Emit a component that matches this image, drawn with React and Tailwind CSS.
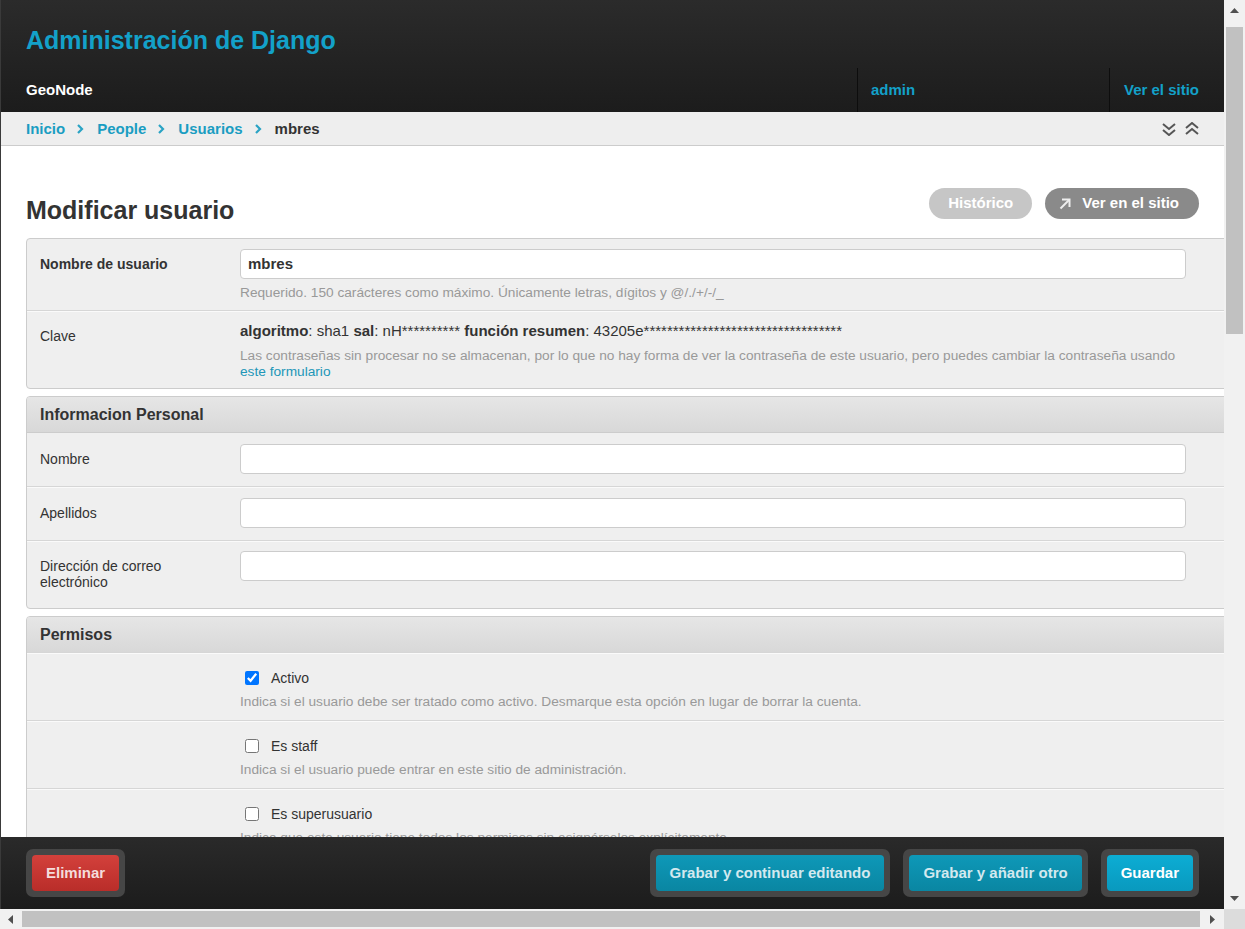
import React from 'react';

const cyan = 'text-[#13a1c9]';

const Crumb = () => (
  <svg width="8" height="10" viewBox="0 0 8 10" className="ml-[11px] mr-[13px]">
    <polyline points="2,1 6,5 2,9" fill="none" stroke="#2aa3c4" strokeWidth="2.2" />
  </svg>
);

const Chevrons = ({ up }) => (
  <svg width="14" height="14" viewBox="0 0 14 14">
    {up ? (
      <>
        <polyline points="1,6 7,1 13,6" fill="none" stroke="#555" strokeWidth="2" />
        <polyline points="1,12 7,7 13,12" fill="none" stroke="#555" strokeWidth="2" />
      </>
    ) : (
      <>
        <polyline points="1,2 7,7 13,2" fill="none" stroke="#555" strokeWidth="2" />
        <polyline points="1,8 7,13 13,8" fill="none" stroke="#555" strokeWidth="2" />
      </>
    )}
  </svg>
);

const TextInput = ({ value }) => (
  <div className="w-[946px] h-[30px] bg-white border border-[#cccccc] rounded-[4px] flex items-center px-[7px] text-[15px] font-bold text-[#333]">
    {value}
  </div>
);

const Row = ({ label, bold, first, pt = 'pt-[11px]', pb = 'pb-[12px]', children }) => (
  <div
    className={`flex px-[13px] ${pt} ${pb} ${first ? '' : 'border-t border-[#d6d6d6] shadow-[inset_0_1px_0_#fafafa]'}`}
  >
    <div className={`w-[200px] shrink-0 pr-[12px] pt-[7px] leading-4 text-[14px] text-[#333] ${bold ? 'font-bold' : ''}`}>
      {label}
    </div>
    <div>{children}</div>
  </div>
);

const Help = ({ children }) => (
  <div className="mt-[5px] leading-[18px] text-[13.7px] text-[#999]">{children}</div>
);

const CheckRow = ({ label, help, checked }) => (
  <div className="flex px-[13px] pt-[15px] pb-[9px] border-t border-[#d6d6d6] shadow-[inset_0_1px_0_#fafafa]">
    <div className="w-[200px] shrink-0" />
    <div>
      <div className="flex items-center h-[20px]">
        <input type="checkbox" defaultChecked={checked} className="m-0 ml-[5px] w-[14px] h-[14px]" />
        <span className="ml-[12px] text-[14px] text-[#333]">{label}</span>
      </div>
      <Help>{help}</Help>
    </div>
  </div>
);

const Fieldset = ({ title, children }) => (
  <div className="w-[1210px] mb-[7px] border border-[#cccccc] rounded-[4px] bg-[#efefef]">
    {title && (
      <div className="h-[36px] flex items-center px-[13px] bg-gradient-to-b from-[#e6e6e6] to-[#d8d8d8] border-b border-[#cccccc] rounded-t-[3px] text-[16px] font-bold text-[#333]">
        {title}
      </div>
    )}
    {children}
  </div>
);

const FooterButton = ({ label, tone }) => {
  const tones = {
    red: 'bg-gradient-to-b from-[#d3403b] to-[#b92d29] text-[#f4dcdc]',
    teal: 'bg-gradient-to-b from-[#0e98b8] to-[#0a86a2] text-[#d3e9ef]',
    blue: 'bg-gradient-to-b from-[#0cadd4] to-[#0999be] text-white',
  };
  return (
    <div className="rounded-[7px] bg-[#464646] p-[6px]">
      <div className={`h-[36px] px-[14px] rounded-[4px] flex items-center text-[15px] font-bold ${tones[tone]}`}>
        {label}
      </div>
    </div>
  );
};

const Triangle = ({ dir }) => {
  const pts = {
    up: '0,5 4.5,0 9,5',
    down: '0,0 4.5,5 9,0',
    left: '5,0 0,4.5 5,9',
    right: '0,0 5,4.5 0,9',
  };
  const w = dir === 'up' || dir === 'down' ? 9 : 5;
  const h = dir === 'up' || dir === 'down' ? 5 : 9;
  return (
    <svg width={w} height={h} viewBox={`0 0 ${w} ${h}`}>
      <polygon points={pts[dir]} fill="#505050" />
    </svg>
  );
};

export default function App() {
  return (
    <div className="w-[1245px] h-[929px] flex flex-col overflow-hidden font-['Liberation_Sans',Arial,sans-serif]">
      <div className="flex h-[909px]">
        {/* Main page */}
        <div className="w-[1224px] h-full flex flex-col overflow-hidden border-l border-[#3a3a3a]">
          {/* Header */}
          <header className="bg-gradient-to-b from-[#2b2b2b] to-[#1c1c1c]">
            <div className="h-[67px] pl-[25px] pt-[25px]">
              <h1 className={`text-[25px] leading-[30px] font-bold ${cyan}`}>Administración de Django</h1>
            </div>
            <div className="flex h-[45px] pt-[1px]">
              <div className="flex-1 flex items-center pl-[25px] text-[15px] font-bold text-white">GeoNode</div>
              <div className="w-[252px] h-full flex items-center pl-[13px] border-l border-[#0d0d0d] text-[15px] font-bold text-[#13a1c9]">
                admin
              </div>
              <div className="h-full flex items-center pl-[14px] pr-[25px] border-l border-[#0d0d0d] text-[15px] font-bold text-[#13a1c9]">
                Ver el sitio
              </div>
            </div>
          </header>

          {/* Breadcrumbs */}
          <div className="h-[34px] shrink-0 flex items-center pt-[1px] px-[25px] bg-[#eeeeee] border-b border-[#cccccc] text-[15px] font-bold">
            <span className="text-[#1a9dc2]">Inicio</span>
            <Crumb />
            <span className="text-[#1a9dc2]">People</span>
            <Crumb />
            <span className="text-[#1a9dc2]">Usuarios</span>
            <Crumb />
            <span className="text-[#333]">mbres</span>
            <div className="ml-auto flex items-center gap-[9px]">
              <Chevrons />
              <Chevrons up />
            </div>
          </div>

          {/* Content */}
          <main className="flex-1 overflow-hidden bg-white pl-[25px] pt-[42px]">
            <div className="flex items-start justify-between w-[1173px] h-[37px] mb-[13px]">
              <h2 className="mt-[7px] text-[25px] leading-[30px] font-bold text-[#333]">Modificar usuario</h2>
              <div className="flex gap-[13px]">
                <div className="h-[31px] px-[19px] rounded-full bg-[#c6c6c6] flex items-center text-[15px] font-bold text-white">
                  Histórico
                </div>
                <div className="h-[31px] pl-[14px] pr-[20px] rounded-full bg-[#8a8a8a] flex items-center gap-[11px] text-[15px] font-bold text-white">
                  <svg width="12" height="12" viewBox="0 0 12 12">
                    <line x1="1.5" y1="10.5" x2="10" y2="2" stroke="#eee" strokeWidth="2" />
                    <polyline points="3,1.5 10.5,1.5 10.5,9" fill="none" stroke="#eee" strokeWidth="2" />
                  </svg>
                  Ver en el sitio
                </div>
              </div>
            </div>

            <Fieldset>
              <Row label="Nombre de usuario" bold first pt="pt-[10px]" pb="pb-[8px]">
                <TextInput value="mbres" />
                <Help>Requerido. 150 carácteres como máximo. Únicamente letras, dígitos y @/./+/-/_</Help>
              </Row>
              <Row label="Clave" pt="pt-[10px]" pb="pb-[8px]">
                <div className="leading-[20px] text-[15px] text-[#333]">
                  <b>algoritmo</b>: sha1 <b>sal</b>: nH********** <b>función resumen</b>: 43205e**********************************
                </div>
                <div className="mt-[7px] w-[960px] leading-4 text-[13.7px] text-[#999] whitespace-nowrap">
                  Las contraseñas sin procesar no se almacenan, por lo que no hay forma de ver la contraseña de este usuario, pero puedes cambiar la contraseña usando
                  <br />
                  <span className="text-[#2196b8]">este formulario</span>
                </div>
              </Row>
            </Fieldset>

            <Fieldset title="Informacion Personal">
              <Row label="Nombre" first>
                <TextInput />
              </Row>
              <Row label="Apellidos">
                <TextInput />
              </Row>
              <Row label="Dirección de correo electrónico" pt="pt-[10px]" pb="pb-[18px]">
                <TextInput />
              </Row>
            </Fieldset>

            <Fieldset title="Permisos">
              <div className="-mt-px">
                <CheckRow
                  checked
                  label="Activo"
                  help="Indica si el usuario debe ser tratado como activo. Desmarque esta opción en lugar de borrar la cuenta."
                />
                <CheckRow label="Es staff" help="Indica si el usuario puede entrar en este sitio de administración." />
                <CheckRow
                  label="Es superusuario"
                  help="Indica que este usuario tiene todos los permisos sin asignárselos explícitamente."
                />
              </div>
            </Fieldset>
          </main>

          {/* Submit row */}
          <footer className="h-[72px] shrink-0 flex items-center px-[25px] bg-gradient-to-b from-[#2a2a2a] to-[#1c1c1c]">
            <FooterButton label="Eliminar" tone="red" />
            <div className="ml-auto flex gap-[13px]">
              <FooterButton label="Grabar y continuar editando" tone="teal" />
              <FooterButton label="Grabar y añadir otro" tone="teal" />
              <FooterButton label="Guardar" tone="blue" />
            </div>
          </footer>
        </div>

        {/* Vertical scrollbar */}
        <div className="w-[21px] h-full bg-[#f1f1f1] flex flex-col items-center">
          <div className="h-[21px] flex items-center justify-center">
            <Triangle dir="up" />
          </div>
          <div className="mt-[6px] w-[17px] h-[307px] bg-[#c1c1c1]" />
          <div className="mt-auto h-[21px] flex items-center justify-center">
            <Triangle dir="down" />
          </div>
        </div>
      </div>

      {/* Horizontal scrollbar */}
      <div className="flex h-[20px]">
        <div className="w-[1224px] bg-[#f1f1f1] flex items-center">
          <div className="w-[20px] flex justify-center">
            <Triangle dir="left" />
          </div>
          <div className="ml-[2px] w-[1178px] h-[16px] bg-[#c1c1c1]" />
          <div className="flex-1 flex justify-center">
            <Triangle dir="right" />
          </div>
        </div>
        <div className="w-[21px] bg-[#dcdcdc]" />
      </div>
    </div>
  );
}
